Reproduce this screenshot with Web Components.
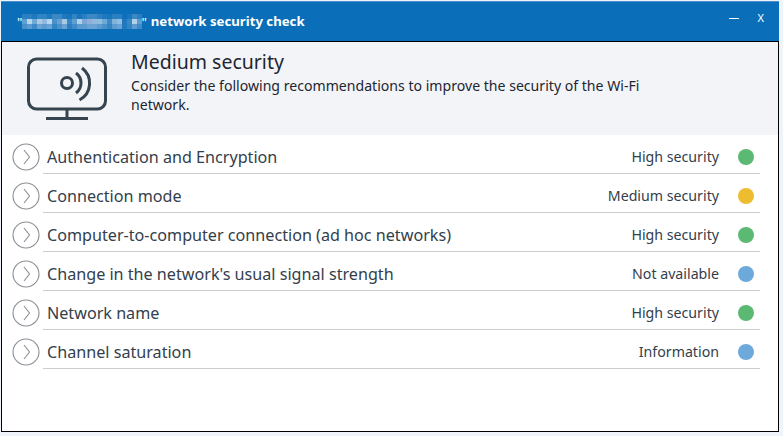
<!DOCTYPE html>
<html>
<head>
<meta charset="utf-8">
<title>Network security check</title>
<style>
    html, body { margin: 0; height: 100%; background: #eff3fa; }
    body { padding: 1px 4px 4px 1px; box-sizing: border-box; height: 436px; width: 783px; font-family: "Noto Sans", sans-serif; }
</style>
</head>
<body>
<security-window>
    <span slot="title">network security check</span>
    <security-summary heading="Medium security">Consider the following recommendations to improve the security of the Wi-Fi network.</security-summary>
    <check-row label="Authentication and Encryption" status="High security" level="high"></check-row>
    <check-row label="Connection mode" status="Medium security" level="medium"></check-row>
    <check-row label="Computer-to-computer connection (ad hoc networks)" status="High security" level="high"></check-row>
    <check-row label="Change in the network's usual signal strength" status="Not available" level="info"></check-row>
    <check-row label="Network name" status="High security" level="high"></check-row>
    <check-row label="Channel saturation" status="Information" level="info"></check-row>
</security-window>

<script>
class SecurityWindow extends HTMLElement {
    constructor(){
        super();
        const template = document.createElement('template');
        // the blurred network name, three rows of 24 blocks
        const blocks = [
            ['#2a80c2','#2a80c2','#1f79bf','#3084c4','#3084c4','#1f79bf','#3c88c5','#3c88c5','#1f79bf','#1a76bc','#3084c4','#1a76bc','#2a80c2','#3c88c5','#3c88c5','#2a80c2','#1f79bf','#1a76bc','#2a80c2','#2a80c2','#0f70b9','#1a76bc','#3c88c5','#2a80c2'],
            ['#5fa0d2','#b5d5ea','#6fa9d6','#b0c8e4','#8fb9dd','#b5d7ec','#4a90c9','#6a9fd3','#a5cae3','#3a87c5','#5e9ed0','#b0d0e8','#7aa5d5','#8fb0da','#8fbadd','#90bcdd','#6fa9d5','#3f8ac7','#7fb3da','#8fbde0','#1f78bd','#3a87c5','#b0cfe8','#5a9ccf'],
            ['#4a90ca','#5c9bcf','#3f8ac7','#6aa3d3','#5c9bcf','#6aa3d3','#3384c4','#4a90ca','#6aa3d3','#2a80c2','#3f8ac7','#5c9bcf','#5c9bcf','#6aa3d3','#6aa3d3','#5c9bcf','#4a90ca','#3384c4','#5c9bcf','#6aa3d3','#1f79bf','#3384c4','#5c9bcf','#3f8ac7']
        ];
        template.innerHTML = `
        <style>
            :host{
                display: flex;
                flex-direction: column;
                height: 100%;
                color: #2c3a47;
            }
            .bar{
                display: flex;
                align-items: center;
                height: 39px;
                padding-left: 16px;
                background: #0a6eb8;
                border-top: 1px solid #4a90cf;
                color: #fff;
                font-size: 13.2px;
                font-weight: 700;
                flex: none;
            }
            .mask{
                display: grid;
                grid-template-columns: repeat(24, 5px);
                grid-auto-rows: 5px;
                margin-right: -1px;
            }
            .quote{
                font-weight: 400;
            }
            .name{
                margin-left: 4px;
                padding-bottom: 1px;
            }
            .buttons{
                margin-left: auto;
                display: flex;
                align-items: center;
                gap: 19px;
                padding-right: 15px;
                padding-bottom: 8px;
                font-size: 11px;
                font-weight: 400;
            }
            .min{
                width: 10px;
                height: 1px;
                background: #fff;
                margin-top: 2px;
            }
            .body{
                flex: 1;
                display: flex;
                flex-direction: column;
                background: #fff;
                border: 1px solid #000;
                min-height: 0;
            }
        </style>
        <div class="bar">
            <span class="quote">"</span>
            <span class="mask" id="mask"></span>
            <span class="quote">"</span>
            <span class="name"><slot name="title"></slot></span>
            <div class="buttons"><div class="min"></div><span>X</span></div>
        </div>
        <div class="body"><slot></slot></div>
        `;
        this.attachShadow({ mode: 'open' });
        this.shadowRoot.appendChild(template.content.cloneNode(true));
        const mask = this.shadowRoot.querySelector('#mask');
        blocks.flat().forEach(c => {
            const b = document.createElement('i');
            b.style.background = c;
            mask.appendChild(b);
        });
    }
}

class SecuritySummary extends HTMLElement {
    constructor(){
        super();
        const template = document.createElement('template');
        template.innerHTML = `
        <style>
            :host{
                display: flex;
                height: 93px;
                background: #f3f4f7;
                color: #1d2630;
                flex: none;
            }
            svg{
                margin: 15px 0 0 25px;
                flex: none;
            }
            .text{
                margin-left: 24px;
                padding-top: 6px;
                width: 530px;
            }
            h1{
                margin: 0;
                font-size: 19.5px;
                font-weight: 400;
                line-height: 27px;
            }
            p{
                margin: 1px 0 0;
                font-size: 14.1px;
                line-height: 19px;
            }
        </style>
        <svg width="80" height="64" viewBox="0 0 80 64" fill="none" stroke="#36444f" stroke-width="3">
            <rect x="1.5" y="2" width="77" height="50" rx="8"/>
            <path d="M40 52v9M19 61.5h42" />
            <circle cx="40" cy="26" r="5.5"/>
            <path d="M49 16a12.5 12.5 0 0 1 0 20" />
            <path d="M55 11a19 19 0 0 1 -2.5 32" />
        </svg>
        <div class="text">
            <h1></h1>
            <p><slot></slot></p>
        </div>
        `;
        this.attachShadow({ mode: 'open' });
        this.shadowRoot.appendChild(template.content.cloneNode(true));
        this.shadowRoot.querySelector('h1').textContent = this.getAttribute('heading');
    }
}

class CheckRow extends HTMLElement {
    constructor(){
        super();
        const template = document.createElement('template');
        template.innerHTML = `
        <style>
            :host{
                display: block;
                height: 39px;
                flex: none;
                color: #33404c;
                font-size: 16.15px;
            }
            .row{
                display: flex;
                align-items: center;
                box-sizing: border-box;
                height: 38px;
                padding-top: 6px;
                margin-left: 10px;
                margin-right: 18px;
            }
            svg{
                margin-top: -1px;
            }
            .label{
                margin-left: 7px;
            }
            .status{
                margin-left: auto;
                padding-bottom: 2px;
                font-size: 14.2px;
            }
            .dot{
                width: 16px;
                height: 16px;
                border-radius: 50%;
                margin-left: 19px;
                margin-right: 6px;
            }
            .high{ background: #5bb974; }
            .medium{ background: #eebd2f; }
            .info{ background: #6ea9dc; }
            .line{
                height: 1px;
                background: #cccccc;
                margin: 0 18px 0 41px;
            }
        </style>
        <div class="row">
            <svg width="28" height="28" viewBox="0 0 28 28" fill="none" stroke="#8a8f94" stroke-width="1.1">
                <circle cx="14" cy="14" r="13"/>
                <path d="M12 7 17.5 14 12 21"/>
            </svg>
            <span class="label"></span>
            <span class="status"></span>
            <span class="dot"></span>
        </div>
        <div class="line"></div>
        `;
        this.attachShadow({ mode: 'open' });
        this.shadowRoot.appendChild(template.content.cloneNode(true));
        this.shadowRoot.querySelector('.label').textContent = this.getAttribute('label');
        this.shadowRoot.querySelector('.status').textContent = this.getAttribute('status');
        this.shadowRoot.querySelector('.dot').classList.add(this.getAttribute('level'));
    }
}

customElements.define('security-window', SecurityWindow);
customElements.define('security-summary', SecuritySummary);
customElements.define('check-row', CheckRow);
</script>
</body>
</html>
